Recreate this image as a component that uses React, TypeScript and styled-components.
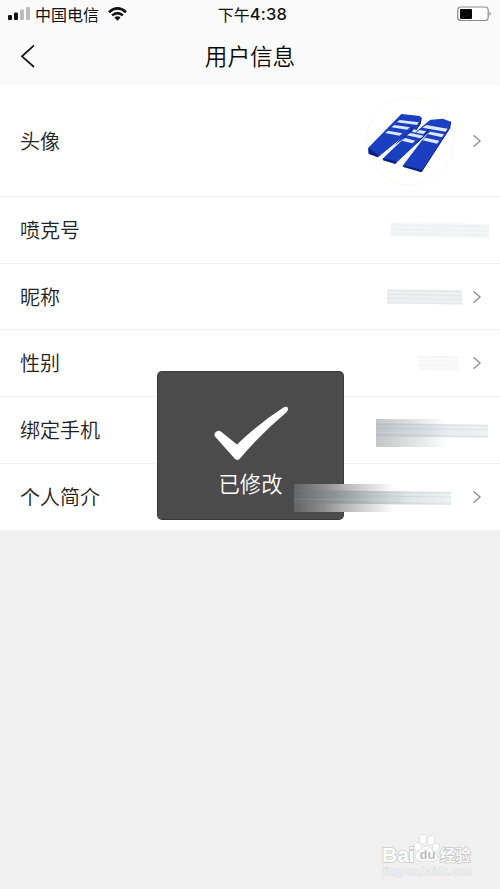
import React from 'react';
import styled, { createGlobalStyle } from 'styled-components';

const GlobalStyle = createGlobalStyle`
  * { box-sizing: border-box; }
  body {
    margin: 0;
    background: #f0f0f0;
    font-family: "Noto Sans CJK SC", sans-serif;
    color: #2b2b2b;
  }
`;

const Screen = styled.div`
  position: relative;
  width: 500px;
  height: 889px;
  overflow: hidden;
  background: #f0f0f0;
`;

const Header = styled.header`
  height: 85px;
  background: #fafafa;
`;

const StatusBar = styled.div`
  height: 27px;
  padding: 0 7px 0 8px;
  display: grid;
  grid-template-columns: 1fr auto 1fr;
  align-items: center;
  color: #111;
  font-size: 16px;
  line-height: 26px;
`;

const Carrier = styled.div`
  display: flex;
  align-items: center;
  gap: 5px;
  svg { display: block; }
  svg:last-child { margin-left: 4px; }
`;

const Clock = styled.div`
  display: flex;
  padding-left: 4px;
`;

const Digits = styled.span`
  font-family: Inter, sans-serif;
  font-weight: 500;
  font-size: 16.5px;
  letter-spacing: 0.2px;
`;

const Battery = styled.svg`
  justify-self: end;
  display: block;
`;

const TitleBar = styled.div`
  height: 58px;
  display: grid;
  grid-template-columns: 60px 1fr 60px;
  align-items: center;
  padding: 0 20px;
`;

const BackIcon = styled.svg`
  display: block;
`;

const Title = styled.h1`
  margin: 0;
  font-size: 22.6px;
  line-height: 56px;
  font-weight: 350;
  text-align: center;
  color: #080808;
`;

const List = styled.main`
  background: #fff;
`;

const Row = styled.div<{ $height: number; $last?: boolean }>`
  height: ${(p) => p.$height}px;
  display: flex;
  align-items: center;
  padding: 0 18px 0 20px;
  border-bottom: ${(p) => (p.$last ? 'none' : '1px solid #f1f1f1')};
`;

const Label = styled.span`
  flex: 1;
  font-size: 20px;
  line-height: 28px;
  font-weight: 350;
  color: #222;
`;

const ChevronIcon = styled.svg`
  display: block;
  flex: none;
`;

const Avatar = styled.svg`
  display: block;
  flex: none;
  margin-right: 15px;
`;

const Smudge = styled.div<{ $w: number; $right: number; $tone: string; $edge: string; $shift?: number }>`
  width: ${(p) => p.$w}px;
  height: 14px;
  margin-right: ${(p) => p.$right}px;
  transform: translateY(${(p) => p.$shift ?? 0}px) skewY(0.9deg);
  background: linear-gradient(
    ${(p) => p.$edge} 0 1px, ${(p) => p.$tone} 2px 4px, ${(p) => p.$edge} 5px,
    ${(p) => p.$tone} 6px 8px, ${(p) => p.$edge} 9px, ${(p) => p.$tone} 10px 12px, ${(p) => p.$edge} 14px
  );
`;

const LongSmudge = styled.div<{ $w: number; $right: number; $shift: number }>`
  position: relative;
  z-index: 2;
  width: ${(p) => p.$w}px;
  height: 28px;
  margin-right: ${(p) => p.$right}px;
  transform: translateY(${(p) => p.$shift}px);
`;

const Fade = styled.div<{ $w: number; $fill: string }>`
  width: ${(p) => p.$w}px;
  height: 28px;
  background: ${(p) => p.$fill};
`;

const Streak = styled.div<{ $top: number; $fill: string }>`
  position: absolute;
  left: 0;
  right: 0;
  top: ${(p) => p.$top}px;
  height: 13px;
  transform: skewY(0.8deg);
  background:
    linear-gradient(rgba(130,145,150,.12) 0 1px, transparent 2px 4px, rgba(130,145,150,.14) 5px, transparent 6px 8px, rgba(255,255,255,.12) 9px, transparent 10px, rgba(130,145,150,.12) 12px),
    ${(p) => p.$fill};
`;

const Toast = styled.div`
  position: absolute;
  z-index: 1;
  left: 157px;
  top: 371px;
  width: 187px;
  height: 149px;
  padding-top: 34px;
  border-radius: 5px;
  border: 1px solid rgba(40, 40, 40, 0.5);
  background: rgba(64, 64, 64, 0.94);
  display: flex;
  flex-direction: column;
  align-items: center;
`;

const ToastText = styled.span`
  margin-top: 5px;
  font-size: 21.3px;
  line-height: 32px;
  font-weight: 350;
  color: #fff;
`;

const Watermark = styled.div`
  position: absolute;
  left: 382px;
  top: 833px;
  width: 92px;
`;

const Brand = styled.div`
  height: 32px;
  display: flex;
  align-items: flex-end;
  color: #fff;
  paint-order: stroke fill;
  -webkit-text-stroke: 1.6px #c8c8c8;
`;

const Latin = styled.span`
  font: bold 21px/21px "Liberation Sans", sans-serif;
`;

const Paw = styled.svg`
  display: block;
  width: 25px;
  height: 32px;
  margin: 0 1px 1px -1px;
  overflow: visible;
`;

const Han = styled.span`
  font-size: 15.5px;
  font-weight: 500;
  line-height: 21px;
`;

const Site = styled.div`
  font: 11px/13px "Liberation Sans", sans-serif;
  color: #f8f8f8;
  paint-order: stroke fill;
  -webkit-text-stroke: 1.2px #d9d9d9;
  padding-left: 1px;
`;

const Chevron = () => (
  <ChevronIcon width="10" height="14" viewBox="0 0 10 14" fill="none" stroke="#929292" strokeWidth="1.4">
    <path d="M1.5 1.2 8 7 1.5 12.8" />
  </ChevronIcon>
);

const AvatarPicture = () => (
  <Avatar width="92" height="92" viewBox="365 95 92 92">
    <circle cx="410" cy="141" r="44" fill="#fff" stroke="#f8f8f4" />
    <g transform="translate(362 107) scale(.3333)">
      <g fill="#1a3fc0">
        <path d="M118 21 174 27 178 34 176 50 150 84 140 76 48 151 20 140 19 122Z" />
        <path d="M128 80 152 60 160 76 205 38 215 62 100 170 62 156Z" />
        <path d="M207 38 243 35 266 44 263 64 178 195 123 175 178 103 196 82 180 70Z" />
      </g>
      <path d="M19 123 20 140 48 151 50 145ZM62 154 63 160 100 171 104 163ZM122 174 124 180 178 196 180 188Z" fill="#0a2079" />
      <path d="M178 32 175 50 156 78M266 44 263 64 178 195M154 60 142 77 126 92M200 66 184 90 165 108" fill="none" stroke="#0a1f70" strokeWidth="3" />
      <path d="M128 92 50 151 63 154ZM174 104 103 170 123 174Z" fill="#fff" />
      <g fill="#dce8fb">
        <path d="m113 39 57 7-5 8-61-8Z" />
        <path d="m97 54 47 7-9 7-47-7Z" />
        <path d="m79 71 42 8-9 7-43-8Z" />
        <path d="m155 67 11 3-6 7-10-3Z" />
        <path d="m145 78 40 8-9 8-42-9Z" />
        <path d="m193 54 64 11-6 9-70-12Z" />
        <path d="m173 69 20 4-9 8-22-4Z" />
        <path d="m205 74 41 8-6 9-44-10Z" />
        <path d="m190 92 42 9-7 9-43-10Z" />
        <path d="m130 93 30 8-9 8-32-8Z" />
      </g>
    </g>
  </Avatar>
);

export default function App() {
  return (
    <>
      <GlobalStyle />
      <Screen>
        <Header>
          <StatusBar>
            <Carrier>
              <svg width="22" height="14" viewBox="0 0 22 14">
                <rect y="8" width="4" height="5" rx="1" fill="#111" />
                <rect x="6" y="5.500" width="4" height="7.500" rx="1" fill="#111" />
                <rect x="12" y="2.500" width="4" height="10.500" rx="1" fill="#bcbcbc" />
                <rect x="18" width="4" height="13" rx="1" fill="#bcbcbc" />
              </svg>
              <span>中国电信</span>
              <svg width="19" height="14" viewBox="0 0 19 14" fill="none" stroke="#111" strokeWidth="2.500">
                <path d="M1 5.200Q9.500-2.400 18 5.200M4.100 8.400Q9.500 3.800 14.900 8.400" />
                <path d="M6.400 10.400Q9.500 8 12.600 10.400L9.500 13.700Z" fill="#111" stroke="none" />
              </svg>
            </Carrier>
            <Clock>下午<Digits>4:38</Digits></Clock>
            <Battery width="36" height="16" viewBox="0 0 36 16">
              <rect x=".7" y="1" width="30.500" height="13.500" rx="3.300" fill="#fff" stroke="#8b8b8b" strokeWidth="1.2" />
              <rect x="3" y="3" width="12" height="10" rx="1" fill="#080808" />
              <path d="M32.500 5.500Q35 7.700 32.500 10Z" fill="#888" />
            </Battery>
          </StatusBar>
          <TitleBar>
            <BackIcon width="16" height="24" viewBox="0 0 16 24" fill="none" stroke="#111" strokeWidth="1.700">
              <path d="M14 1.300 2 12.300 14 23" />
            </BackIcon>
            <Title>用户信息</Title>
          </TitleBar>
        </Header>
        <List>
          <Row $height={112}>
            <Label>头像</Label>
            <AvatarPicture />
            <Chevron />
          </Row>
          <Row $height={67}>
            <Label>喷克号</Label>
            <Smudge $w={98} $right={-7} $tone="#eff3f4" $edge="#f6f8f8" />
          </Row>
          <Row $height={66}>
            <Label>昵称</Label>
            <Smudge $w={75} $right={10} $tone="#edf0f1" $edge="#e1e5e6" />
            <Chevron />
          </Row>
          <Row $height={67}>
            <Label>性别</Label>
            <Smudge $w={41} $right={13} $tone="#fafafa" $edge="#f4f4f4" />
            <Chevron />
          </Row>
          <Row $height={67}>
            <Label>绑定手机</Label>
            <LongSmudge $w={112} $right={-6} $shift={3}>
              <Fade $w={72} $fill="linear-gradient(90deg, #c3c5c6, #d9dbdc 40%, #fff)" />
              <Streak $top={5} $fill="linear-gradient(90deg, #bcc4c8, #d5dadd 40%, #e8ecef 65%, #eff2f3)" />
            </LongSmudge>
          </Row>
          <Row $height={66} $last>
            <Label>个人简介</Label>
            <LongSmudge $w={157} $right={21} $shift={1}>
              <Fade $w={100} $fill="linear-gradient(90deg, rgba(110,110,110,.7), #8e8e8e 30%, #b8b8b8 52%, #fff)" />
              <Streak $top={7} $fill="linear-gradient(90deg, #626668, #929799 28%, #c2c7c9 52%, #e1e6e8 75%, #edf1f2)" />
            </LongSmudge>
            <Chevron />
          </Row>
        </List>
        <Toast>
          <svg width="76" height="56" viewBox="0 0 76 56">
            <path d="M3.500 25.500Q6 24 8.500 26L24 38.500Q47 16.500 70.500 1.500Q74-.2 75 2.200Q75.500 4 73.500 6.200Q48 27.500 26.500 53Q24.500 55 22 53L2 30.500Q.2 27.500 3.500 25.500Z" fill="#fff" />
          </svg>
          <ToastText>已修改</ToastText>
        </Toast>
        <Watermark>
          <Brand>
            <Latin>Bai</Latin>
            <Paw viewBox="0 0 27 32" fill="#fff" stroke="#c6c6c6" strokeWidth=".9">
              <ellipse cx="4" cy="14.500" rx="3.300" ry="4.300" transform="rotate(-15 4 14.500)" />
              <ellipse cx="10" cy="6.500" rx="3.500" ry="4.800" />
              <ellipse cx="18.500" cy="7.500" rx="3.500" ry="4.800" transform="rotate(10 18.500 7.500)" />
              <ellipse cx="23.500" cy="15.500" rx="3.200" ry="4.300" transform="rotate(18 23.500 15.500)" />
              <path d="M13.500 14C18 14 19 18.500 23 21.500C28 27 23 31 18 30Q13.500 29 9 30C3 31-1 26 4 21.500C8 18 8.500 14 13.500 14Z" />
              <text x="6" y="28" fontFamily="Liberation Sans, sans-serif" fontSize="14" fontWeight="700" fill="#bdbdbd" stroke="none">du</text>
            </Paw>
            <Han>经验</Han>
          </Brand>
          <Site>jingyan.baidu.com</Site>
        </Watermark>
      </Screen>
    </>
  );
}
